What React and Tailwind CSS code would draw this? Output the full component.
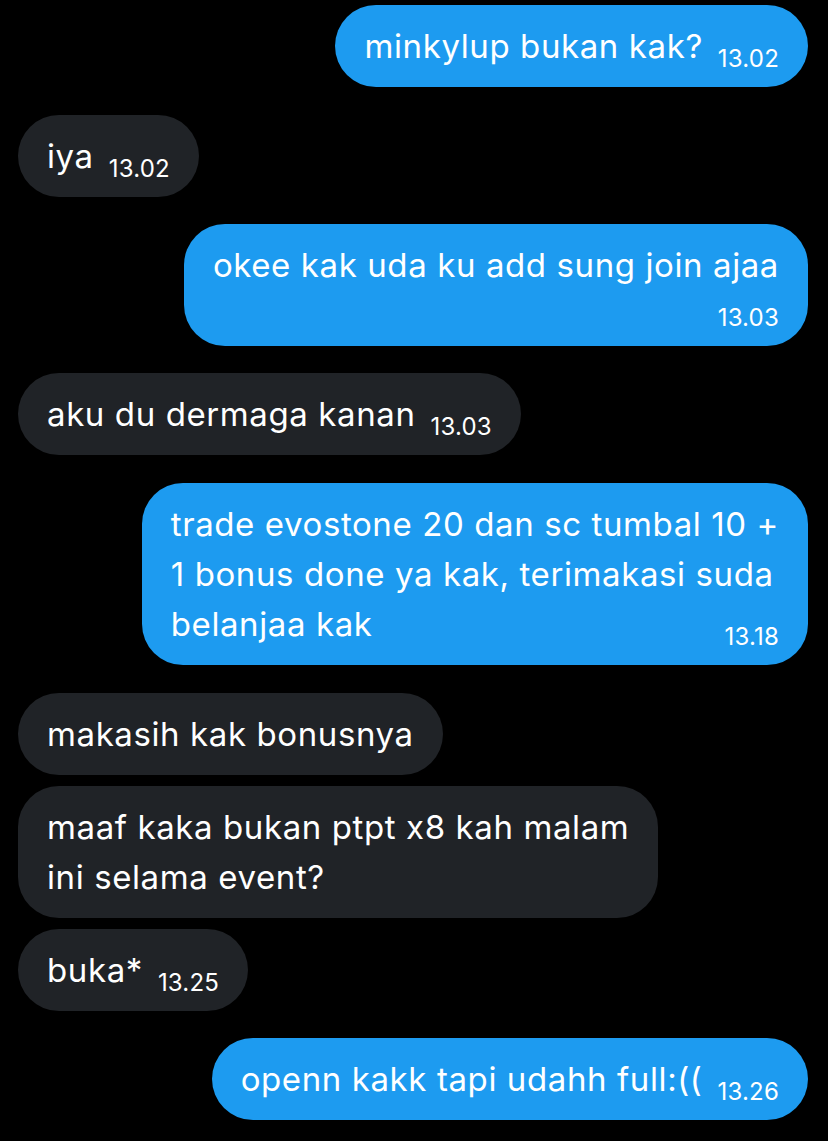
import React from "react";

const font = { fontFamily: "Inter, 'Noto Sans', sans-serif" };

const txt = "text-[33px] tracking-[0.6px] leading-[50px] whitespace-nowrap";

function Time({ t }) {
  return (
    <span className="text-[24px] tracking-[0.2px] leading-none text-white whitespace-nowrap">{t}</span>
  );
}

function Bubble({ me, lines, time, mode, className }) {
  const bg = me ? "bg-[#1d9bf0]" : "bg-[#202327]";
  return (
    <div className={`flex ${me ? "justify-end" : "justify-start"} ${className || ""}`}>
      <div className={`${bg} rounded-[41px] px-[29px] py-4 text-white`}>
        {mode === "inline" && (
          <div className="flex items-end gap-[15px]">
            <span className={txt}>{lines[0]}</span>
            <Time t={time} />
          </div>
        )}
        {mode === "below" && (
          <div className="flex flex-col">
            {lines.map((l, i) => (
              <span key={i} className={txt}>{l}</span>
            ))}
            <div className="flex justify-end mt-[16px]">
              <Time t={time} />
            </div>
          </div>
        )}
        {mode === "last" && (
          <div className="flex flex-col">
            {lines.slice(0, -1).map((l, i) => (
              <span key={i} className={txt}>{l}</span>
            ))}
            <div className="flex items-end justify-between gap-4">
              <span className={txt}>{lines[lines.length - 1]}</span>
              <Time t={time} />
            </div>
          </div>
        )}
        {mode === "plain" && (
          <div className="flex flex-col">
            {lines.map((l, i) => (
              <span key={i} className={txt}>{l}</span>
            ))}
          </div>
        )}
      </div>
    </div>
  );
}

export default function App() {
  return (
    <div className="min-h-[1141px] w-[828px] bg-black pt-[5px] pl-[18px] pr-[20px] overflow-hidden" style={font}>
      <Bubble me lines={["minkylup bukan kak?"]} time="13.02" mode="inline" />
      <Bubble lines={["iya"]} time="13.02" mode="inline" className="mt-[28px]" />
      <Bubble me lines={["okee kak uda ku add sung join ajaa"]} time="13.03" mode="below" className="mt-[27px]" />
      <Bubble lines={["aku du dermaga kanan"]} time="13.03" mode="inline" className="mt-[27px]" />
      <Bubble
        me
        lines={["trade evostone 20 dan sc tumbal 10 +", "1 bonus done ya kak, terimakasi suda", "belanjaa kak"]}
        time="13.18"
        mode="last"
        className="mt-[28px]"
      />
      <Bubble lines={["makasih kak bonusnya"]} mode="plain" className="mt-[28px]" />
      <Bubble lines={["maaf kaka bukan ptpt x8 kah malam", "ini selama event?"]} mode="plain" className="mt-[11px]" />
      <Bubble lines={["buka*"]} time="13.25" mode="inline" className="mt-[11px]" />
      <Bubble me lines={["openn kakk tapi udahh full:(("]} time="13.26" mode="inline" className="mt-[27px]" />
    </div>
  );
}
